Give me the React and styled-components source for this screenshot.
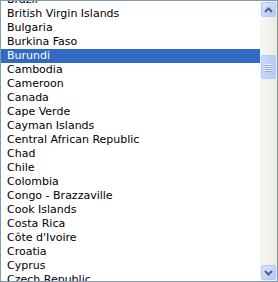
import React from 'react';
import styled, { createGlobalStyle } from 'styled-components';

const GlobalStyle = createGlobalStyle`
  html, body {
    margin: 0;
    padding: 0;
    background: #ffffff;
  }
`;

const countries = [
  'Brazil',
  'British Virgin Islands',
  'Bulgaria',
  'Burkina Faso',
  'Burundi',
  'Cambodia',
  'Cameroon',
  'Canada',
  'Cape Verde',
  'Cayman Islands',
  'Central African Republic',
  'Chad',
  'Chile',
  'Colombia',
  'Congo - Brazzaville',
  'Cook Islands',
  'Costa Rica',
  "Côte d'Ivoire",
  'Croatia',
  'Cyprus',
  'Czech Republic',
  'Denmark',
];

const ListBox = styled.div`
  width: 278px;
  height: 282px;
  box-sizing: border-box;
  border: 1px solid #7f9db9;
  display: flex;
  background: #ffffff;
  overflow: hidden;
`;

const Viewport = styled.div`
  flex: 1;
  overflow: hidden;
`;

const Options = styled.ul`
  list-style: none;
  margin: -8px 0 0 0;
  padding: 0;
`;

const Option = styled.li`
  height: 14px;
  line-height: 14px;
  padding-left: 6px;
  font-family: 'DejaVu Sans', Verdana, sans-serif;
  font-size: 11px;
  white-space: nowrap;
  color: ${p => (p.selected ? '#ffffff' : '#000000')};
  background: ${p => (p.selected ? '#316ac5' : 'transparent')};
`;

const ScrollBar = styled.div`
  width: 17px;
  display: flex;
  flex-direction: column;
  background: linear-gradient(90deg, #f7f6f1 0%, #f3f1ea 60%, #ece9dd 100%);
`;

const ArrowButton = styled.div`
  width: 15px;
  height: 15px;
  margin: 1px 0 1px 1px;
  box-sizing: border-box;
  border: 1px solid #b6c9f4;
  border-radius: 2px;
  background: linear-gradient(135deg, #d9e5fd 0%, #c3d4fa 60%, #b4c8f6 100%);
  display: flex;
  align-items: center;
  justify-content: center;
`;

const Track = styled.div`
  flex: 1;
  position: relative;
`;

const Thumb = styled.div`
  position: absolute;
  left: 1px;
  width: 15px;
  height: 24px;
  box-sizing: border-box;
  border: 1px solid #b6c9f4;
  border-radius: 2px;
  background: linear-gradient(90deg, #c8d7fb 0%, #c0d2fa 50%, #b6caf7 100%);
  display: flex;
  flex-direction: column;
  align-items: center;
  justify-content: center;
  gap: 1px;
`;

const Grip = styled.span`
  display: block;
  width: 7px;
  height: 1px;
  background: #eef3fe;
  box-shadow: 0 1px 0 #8ca6e0;
`;

const Chevron = ({ down }) => (
  <svg width="9" height="6" viewBox="0 0 9 6">
    <path
      d={down ? 'M1 1 L4.5 4.5 L8 1' : 'M1 5 L4.5 1.5 L8 5'}
      fill="none"
      stroke="#4d6185"
      strokeWidth="2"
    />
  </svg>
);

export default function App() {
  const selected = 'Burundi';
  const thumbTop = 37;

  return (
    <>
      <GlobalStyle />
      <ListBox>
        <Viewport>
          <Options>
            {countries.map(name => (
              <Option key={name} selected={name === selected}>
                {name}
              </Option>
            ))}
          </Options>
        </Viewport>
        <ScrollBar>
          <ArrowButton>
            <Chevron />
          </ArrowButton>
          <Track>
            <Thumb style={{ top: thumbTop }}>
              <Grip />
              <Grip />
              <Grip />
              <Grip />
            </Thumb>
          </Track>
          <ArrowButton>
            <Chevron down />
          </ArrowButton>
        </ScrollBar>
      </ListBox>
    </>
  );
}
